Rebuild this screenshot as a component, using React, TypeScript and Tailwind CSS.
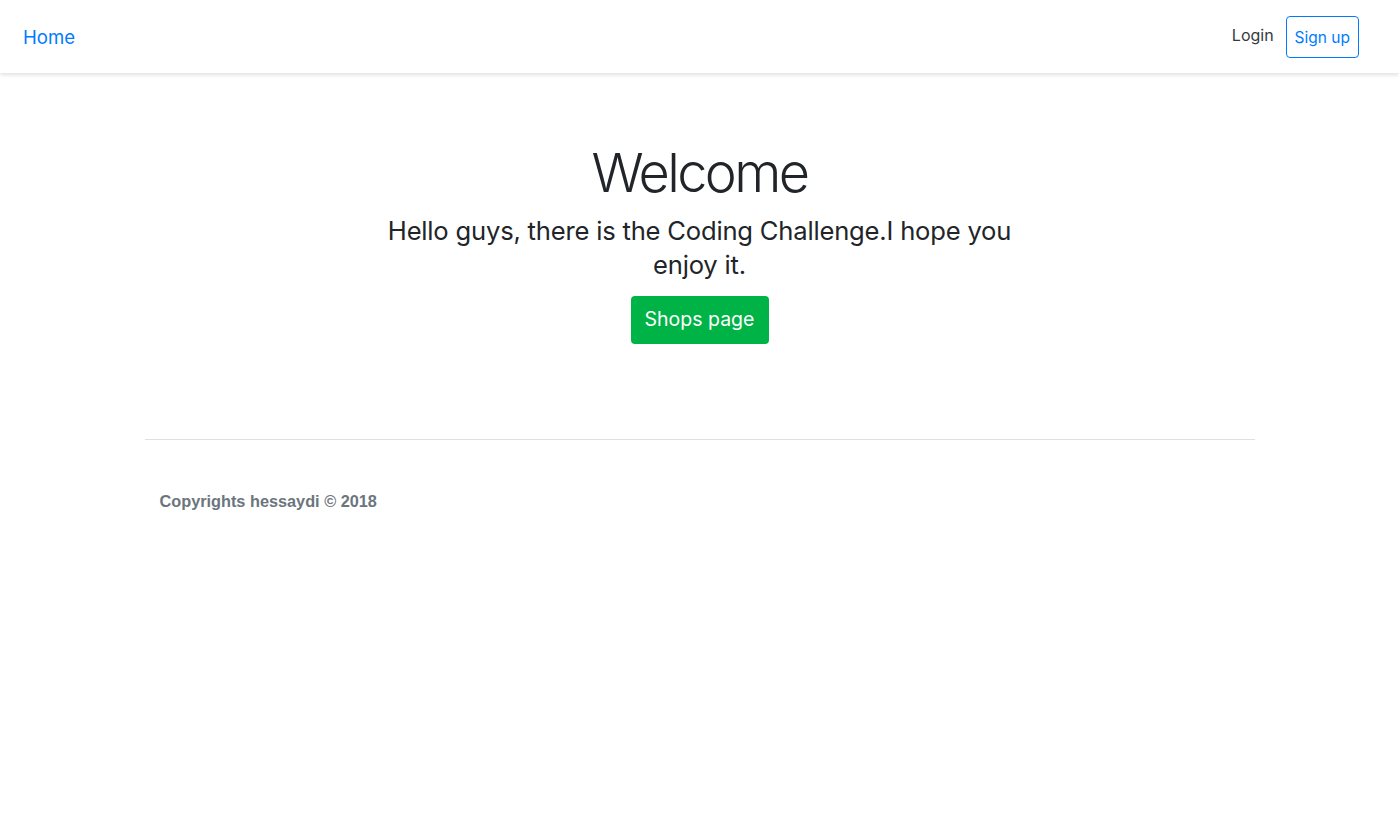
export default function App() {
  return (
    <div className="min-h-screen bg-white text-[#212529]" style={{ fontFamily: "Inter, 'Noto Sans', sans-serif" }}>
      <nav className="h-[73px] flex items-center justify-between pl-[23px] pr-[40px] shadow-[0_2px_4px_rgba(0,0,0,0.12)]">
        <a className="text-[18.6px] text-[#007bff] leading-none mt-[2px]">Home</a>
        <div className="flex items-center gap-[12px]">
          <a className="text-[16px] text-[#343a40] -mt-[4px]">Login</a>
          <button className="h-[42px] px-[8px] pt-[2px] border border-[#007bff] rounded-[4px] text-[15.5px] text-[#007bff]">Sign up</button>
        </div>
      </nav>
      <main className="flex flex-col items-center pt-[68px]">
        <h1 className="text-[54px] font-light leading-[1.2] tracking-[-2.6px]">Welcome</h1>
        <h3 className="mt-[8px] w-[650px] text-center text-[25.6px] font-normal leading-[34px] tracking-[-0.2px]">
          Hello guys, there is the Coding Challenge.I hope you enjoy it.
        </h3>
        <button className="mt-[14px] h-[48px] w-[138px] rounded-[4px] bg-[#00b347] text-white text-[19.5px]">Shops page</button>
      </main>
      <div className="mx-auto w-[1110px] mt-[95px] border-t border-[#e0e0e0]" />
      <footer className="mx-auto w-[1110px] pl-[15px] pt-[49px]">
        <p className="text-[16.3px] font-bold text-[#6c757d]" style={{ fontFamily: "'Liberation Sans', Arial, sans-serif" }}>Copyrights hessaydi © 2018</p>
      </footer>
    </div>
  );
}
